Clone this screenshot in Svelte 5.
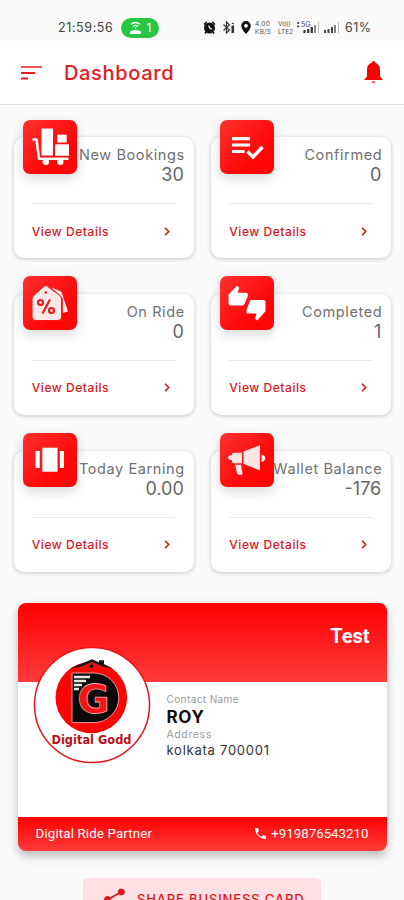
<script lang="ts">
	type Stat = {
		title: string;
		value: string;
		icon: string;
	};

	const stats: Stat[] = [
		{ title: 'New Bookings', value: '30', icon: 'cart' },
		{ title: 'Confirmed', value: '0', icon: 'checklist' },
		{ title: 'On Ride', value: '0', icon: 'tag' },
		{ title: 'Completed', value: '1', icon: 'thumbs' },
		{ title: 'Today Earning', value: '0.00', icon: 'carousel' },
		{ title: 'Wallet Balance', value: '-176', icon: 'megaphone' }
	];
</script>

<div class="screen">
	<div class="status">
		<span class="clock">21:59:56</span>
		<span class="hotspot">
			<svg width="13" height="14" viewBox="0 0 13 14" fill="none" stroke="#fff" stroke-width="1.3">
				<path d="M2 3.2Q6.5 -.2 11 3.2M4 5.4Q6.5 3.500 9 5.400" />
				<path d="M6.500 6v2M1.500 12.300Q1.500 10 4.500 10h4q3 0 3 2.300z" fill="#fff" />
			</svg>
			<span>1</span>
		</span>
		<div class="indicators">
			<svg width="13" height="13" viewBox="0 0 13 13">
				<circle cx="6.500" cy="7" r="5.500" fill="#111" />
				<path d="M1 3.500L3.700 1M12 3.500L9.300 1M3 11l-1 1.500M10 11l1 1.500" stroke="#111" stroke-width="1.700" />
				<path d="M5.500 4.500L7 7.300l2 1" fill="none" stroke="#fff" stroke-width="1.200" />
			</svg>
			<svg class="bluetooth" width="13" height="13" viewBox="0 0 13 13" fill="none" stroke="#333" stroke-width="1.200">
				<path d="M1.500 3.500l6 5.500L4.500 12V1l3 3-6 5.500" />
				<path d="M10.800 4.500v7.500" stroke-width="2.600" />
				<path d="M9.800 2.500h2" />
			</svg>
			<svg class="pin" width="10" height="13" viewBox="0 0 10 13">
				<path d="M5 0a4.800 4.800 0 0 1 4.800 4.800C9.800 8.300 5 13 5 13S.2 8.300.2 4.800A4.800 4.800 0 0 1 5 0z" fill="#111" />
				<circle cx="5" cy="4.800" r="1.900" fill="#fff" />
			</svg>
			<div class="tiny speed">
				<span>4.00</span>
				<span>KB/S</span>
			</div>
			<div class="tiny volte">
				<span>Vo))</span>
				<span>LTE2</span>
			</div>
			<svg class="signal" width="23" height="13" viewBox="0 0 23 13">
				<text x="4" y="6" font-size="7" fill="#444">5G</text>
				<path d="M1.200 1v2M1.200 4.500v2" stroke="#444" stroke-width="1.800" />
				<path d="M7.500 9v3M11.200 8v4M14.800 6v6" stroke="#333" stroke-width="2.200" />
				<path d="M18 4v8" stroke="#666" stroke-width="1.500" />
				<path d="M21.500 1v11" stroke="#bbb" />
			</svg>
			<svg class="signal" width="17" height="13" viewBox="0 0 17 13">
				<path d="M2 9v3M5.500 8v4M9 6v6" stroke="#444" stroke-width="2" />
				<path d="M12 4v8" stroke="#666" stroke-width="1.600" />
				<path d="M15.500 1v11" stroke="#bbb" />
			</svg>
			<span class="battery">61%</span>
		</div>
	</div>

	<header>
		<svg width="22" height="16" viewBox="0 0 22 16" stroke="#e31b23" stroke-width="2">
			<path d="M0 2h21" stroke="#ed555a" />
			<path d="M0 8h14M0 13.500h7" />
		</svg>
		<h1>Dashboard</h1>
		<svg width="19" height="23" viewBox="0 0 19 23" fill="#f80000">
			<path d="M9.500 0c1 0 1.700.7 1.700 1.800 3.200.9 4.800 3.300 4.800 6.700v7l2.500 2.700V19H.5v-.8L3 15.500v-7c0-3.400 1.600-5.800 4.800-6.700C7.800.7 8.500 0 9.500 0z" />
			<path d="M7.500 20.300h4a2 2 0 0 1-4 0z" fill="#fa5555" />
		</svg>
	</header>

	<main>
		<section class="stats">
			{#each stats as stat}
				<article class="stat">
					<div class="badge">
						<svg width="54" height="54" viewBox="0 0 54 54" fill="#fff">
							{#if stat.icon === 'cart'}
								<path d="M9.500 19.500h4l2.500 19.200h29.500" fill="none" stroke="#fff" stroke-width="2.500" stroke-linejoin="round" />
								<rect x="18.500" y="8.500" width="11.500" height="27" />
								<rect x="34.300" y="14.700" width="9.400" height="7.800" />
								<rect x="32" y="24.300" width="14" height="11.500" />
								<circle cx="22.800" cy="41.800" r="3.200" />
								<circle cx="37.300" cy="41.800" r="3.200" />
							{:else if stat.icon === 'checklist'}
								<path d="M12 18.700h18M12 25h18M12 31.500h12.500" stroke="#fff" stroke-width="3.200" />
								<path d="M27.500 31.500l5.500 5.500 9.500-10" fill="none" stroke="#fff" stroke-width="3.400" />
							{:else if stat.icon === 'tag'}
								<path d="M28.500 11.500l8.500 3.500q1.500.6 2 2.200l6 18.300-5.200 1.500V22.500z" fill="#ffe9e9" />
								<path d="M21 10.200q1.700-1.400 3.400 0L37 19.700q1.500 1.200 1.500 3v18.300q0 3.500-3.500 3.500H12.500Q9 44.500 9 41V22.700q0-1.800 1.500-3z" fill="#ffe9e9" stroke="#fb1212" stroke-width="1" />
								<circle cx="22.700" cy="16.500" r="1.300" fill="#f51d1d" />
								<g fill="none" stroke="#e81a1a" stroke-width="2.200">
									<circle cx="17.500" cy="26.500" r="2.500" />
									<circle cx="28.500" cy="34.500" r="2.500" />
									<path d="M27 23.500L19.500 37.500" />
								</g>
							{:else if stat.icon === 'thumbs'}
								<path d="M8.500 18.500L17 9.700l2.200 1.800-1.500 5.200h8.500q1.600 0 1.600 1.600v2l-3.300 7.800q-.6 1.400-2 1.400h-12q-2 0-2-2z" />
								<path d="M45.500 35.300L37.300 44.500l-2.300-1.800 1.500-5.200h-8.500q-1.600 0-1.600-1.600v-2l3.300-8.500q.6-1.400 2-1.400h11.800q2 0 2 2z" />
							{:else if stat.icon === 'carousel'}
								<rect x="19.300" y="14.700" width="15.200" height="24" />
								<rect x="12.500" y="18" width="4.200" height="17" />
								<rect x="36.800" y="18" width="4.200" height="17" />
							{:else}
								<g fill="#ffe5e5">
									<path d="M23.500 18.500L40 12.300v25.300l-16.500-6.800z" />
									<path d="M13.500 19.700H22v10.500h-8.500q-1.500 0-1.500-1.500v-1.500q-4-.4-4-2.700t4-2.500v-.8q0-1.500 1.500-1.500z" />
									<path d="M15 31.800h6l1.500 9q0 1-1 1h-3q-1 0-1.300-1z" />
									<path d="M41.500 21.500q3.800.8 3.800 3.700t-3.800 3.700z" />
								</g>
							{/if}
						</svg>
					</div>
					<div class="figures">
						<span class="title">{stat.title}</span>
						<span class="value">{stat.value}</span>
					</div>
					<div class="details">
						<span>View Details</span>
						<svg width="6" height="9" viewBox="0 0 6 9" fill="none" stroke="#d8161c" stroke-width="1.600">
							<path d="M1 .8l3.700 3.700L1 8.200" />
						</svg>
					</div>
				</article>
			{/each}
		</section>

		<section class="business">
			<div class="company">Test</div>
			<div class="person">
				<svg class="logo" width="118" height="118" viewBox="0 0 118 118">
					<circle cx="59" cy="59" r="57.500" fill="#fff" stroke="#e8141a" stroke-width="1.500" />
					<circle cx="58.300" cy="51.500" r="35.800" fill="#fb0505" />
					<path d="M37 22.500L59 13.200l7 3v-2h5v4.200l9 4-21-3.500z" fill="#151515" />
					<path d="M44 22.300L59 16l15 6.300z" fill="#e31515" />
					<circle cx="58.500" cy="20.300" r="1.800" fill="#200" />
					<path d="M39 27h22a24.800 24.800 0 0 1 0 49.600H39z" fill="#0a0a0a" stroke="#ef9a9a" stroke-width="1" />
					<path d="M41 31h16M41 35h12M41 39h8M41 43h5" stroke="#e5e5e5" stroke-width="2.600" />
					<text class="monogram" x="44.500" y="67" textLength="32" lengthAdjust="spacingAndGlyphs">G</text>
					<text class="brand" x="18.500" y="98" textLength="80" lengthAdjust="spacingAndGlyphs">Digital Godd</text>
				</svg>
				<div class="contact">
					<span class="label contact-label">Contact Name</span>
					<strong>ROY</strong>
					<span class="label">Address</span>
					<span class="address">kolkata 700001</span>
				</div>
			</div>
			<footer>
				<span class="partner">Digital Ride Partner</span>
				<span class="phone">
					<svg width="11" height="11" viewBox="3 3 18 18" fill="#fff">
						<path d="M6.600 10.800c1.400 2.800 3.800 5.100 6.600 6.600l2.200-2.200c.3-.3.700-.4 1-.2 1.100.4 2.300.6 3.600.6.600 0 1 .4 1 1V20c0 .6-.4 1-1 1C10.600 21 3 13.400 3 4c0-.6.4-1 1-1h3.500c.6 0 1 .4 1 1 0 1.300.2 2.500.6 3.600.1.300 0 .7-.2 1z" />
					</svg>
					<span>+919876543210</span>
				</span>
			</footer>
		</section>

		<button class="share">
			<svg width="21" height="23" viewBox="0 0 21 23" fill="#e0141a" stroke="#e0141a">
				<path d="M17 4L4 11.500l13 7.500" fill="none" stroke-width="1.800" />
				<circle cx="17.300" cy="4" r="3" />
				<circle cx="3.500" cy="11.500" r="3" />
				<circle cx="17.300" cy="19" r="3" />
			</svg>
			<span>SHARE BUSINESS CARD</span>
		</button>
	</main>
</div>

<style>
	.screen {
		width: 404px;
		height: 900px;
		overflow: hidden;
		background: #fafafa;
		font-family: Inter, 'Open Sans', sans-serif;
	}

	.status {
		display: flex;
		align-items: center;
		height: 41px;
		padding: 14px 0 0 58px;
		box-sizing: border-box;
		color: #444;
	}

	.clock {
		width: 56px;
		font-size: 12.5px;
		letter-spacing: 0.6px;
	}

	.hotspot {
		display: flex;
		align-items: center;
		justify-content: center;
		gap: 5px;
		width: 38px;
		height: 20px;
		margin-left: 7px;
		border-radius: 10px;
		background: #27c643;
		color: #fff;
		font-size: 12px;
	}

	.indicators {
		display: flex;
		align-items: center;
		margin-left: 44px;
	}

	.bluetooth,
	.pin {
		margin-left: 6px;
	}

	.tiny {
		display: flex;
		flex-direction: column;
		color: #555;
		font-size: 6.5px;
		line-height: 8px;
		white-space: nowrap;
	}

	.speed {
		width: 19px;
		margin-left: 4px;
		letter-spacing: 0.3px;
	}

	.volte {
		width: 16px;
		margin-left: 4px;
	}

	.signal {
		margin-left: 3px;
	}

	.battery {
		margin-left: 5px;
		font-size: 12.5px;
		letter-spacing: 0.4px;
	}

	header {
		display: flex;
		align-items: center;
		height: 64px;
		padding: 0 21px;
		box-sizing: border-box;
		border-bottom: 1px solid #ddd;
		background: #fff;
	}

	h1 {
		flex: 1;
		margin: 0 0 0 21px;
		color: #e31b23;
		font-size: 20px;
		font-weight: 500;
		letter-spacing: 0.65px;
	}

	main {
		display: flex;
		flex-direction: column;
		align-items: center;
	}

	.stats {
		display: grid;
		grid-template-columns: 180px 180px;
		gap: 35.5px 17.5px;
		margin: 32px 0 0 1px;
	}

	.stat {
		position: relative;
		height: 121.3px;
		padding: 8px 10px 0 18px;
		box-sizing: border-box;
		border-radius: 10px;
		background: #fff;
		box-shadow: 0 1px 4px rgba(0, 0, 0, 0.22);
	}

	.badge {
		position: absolute;
		top: -17.5px;
		left: 9px;
		width: 54px;
		height: 54px;
		border-radius: 7px;
		background: linear-gradient(135deg, #ff3030, #ff0505 70%);
		box-shadow: 0 4px 12px rgba(0, 0, 0, 0.17);
	}

	.badge svg {
		display: block;
	}

	.figures {
		display: flex;
		flex-direction: column;
		align-items: flex-end;
		height: 58px;
		color: #707070;
	}

	/* long titles run up over the edge of the badge */
	.title {
		position: relative;
		margin-right: -1px;
		font-size: 14.5px;
		line-height: 20px;
		letter-spacing: 0.6px;
		white-space: nowrap;
	}

	.value {
		color: #666;
		font-size: 18px;
		line-height: 20px;
	}

	.details {
		display: flex;
		align-items: center;
		justify-content: space-between;
		height: 54px;
		margin-right: 9px;
		padding-right: 5px;
		border-top: 1px solid #e9e9e9;
		color: #d8161c;
		font-size: 12px;
		font-weight: 500;
		letter-spacing: 0.55px;
	}

	.business {
		display: flex;
		flex-direction: column;
		width: 369px;
		height: 248px;
		margin-top: 31px;
		border-radius: 8px;
		background: #fff;
		box-shadow: 0 5px 10px rgba(0, 0, 0, 0.25);
	}

	.company {
		height: 79px;
		padding: 21px 17px 0 0;
		box-sizing: border-box;
		border-radius: 8px 8px 0 0;
		background: linear-gradient(#ff0000, #ff3b3b);
		color: #fff;
		font: bold 20px/24px Roboto, sans-serif;
		text-align: right;
	}

	.person {
		display: flex;
		flex: 1;
		align-items: flex-start;
		padding-left: 15px;
	}

	.logo {
		position: relative;
		margin-top: -36px;
	}

	.monogram {
		fill: #f21515;
		stroke: #f7a5a5;
		stroke-width: 0.8px;
		font: bold 39px 'DejaVu Sans', sans-serif;
	}

	.brand {
		fill: #b80f18;
		font: bold 13px 'DejaVu Sans', sans-serif;
	}

	.contact {
		display: flex;
		flex-direction: column;
		margin: 10px 0 0 16px;
	}

	.label {
		color: #999;
		font-size: 10.5px;
		line-height: 14px;
		letter-spacing: 0.6px;
	}

	.contact-label {
		font-size: 10px;
		letter-spacing: 0.4px;
	}

	.contact strong {
		color: #111;
		font-size: 17px;
		font-weight: 700;
		line-height: 22px;
		letter-spacing: 0.7px;
	}

	.address {
		color: #333;
		font-size: 13px;
		line-height: 16px;
		letter-spacing: 0.75px;
	}

	footer {
		display: flex;
		align-items: center;
		justify-content: space-between;
		height: 34px;
		padding: 0 18px;
		border-radius: 0 0 8px 8px;
		background: linear-gradient(#ff0000, #ff3b3b);
		color: #fff;
		font: 13.3px Roboto, sans-serif;
	}

	.partner {
		letter-spacing: 0.15px;
	}

	.phone {
		display: flex;
		align-items: center;
		gap: 5px;
	}

	.share {
		display: flex;
		align-items: flex-start;
		gap: 12px;
		width: 238px;
		height: 44px;
		margin-top: 27px;
		padding: 10px 0 0 21px;
		border: 0;
		border-radius: 5px;
		background: #fce0e2;
		color: #e0141a;
		font: 500 13px/22px Inter, sans-serif;
		letter-spacing: 0.85px;
		white-space: nowrap;
	}
</style>
